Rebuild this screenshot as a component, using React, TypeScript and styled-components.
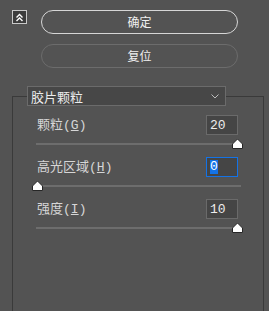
import { createGlobalStyle, styled } from 'styled-components';

const GlobalStyle = createGlobalStyle`
  html, body {
    margin: 0;
    padding: 0;
    background: #535353;
  }
  body {
    width: 269px;
    height: 311px;
    overflow: hidden;
    font-family: "Liberation Mono", "Noto Sans CJK SC", monospace;
  }
`;

const TopBar = styled.div`
  display: flex;
  align-items: flex-start;
  gap: 14px;
  padding: 10px 0 0 12px;
`;

const CollapseBox = styled.div`
  width: 13px;
  height: 12px;
  border: 1px solid #c9c9c9;
  background: #3c3c3c;
  display: flex;
  align-items: center;
  justify-content: center;
`;

const ButtonColumn = styled.div`
  display: flex;
  flex-direction: column;
  gap: 10px;
  width: 197px;
`;

const PillButton = styled.button<{ $primary?: boolean }>`
  height: 24px;
  border-radius: 12px;
  border: 1.5px solid ${(p) => (p.$primary ? '#d6d6d6' : '#6c6c6c')};
  background: transparent;
  color: #f0f0f0;
  font-family: "Noto Sans CJK SC", sans-serif;
  font-size: 12px;
  line-height: 1;
  padding: 0;
  cursor: pointer;
`;

const Group = styled.fieldset`
  margin: 18px 5px 0 12px;
  padding: 9px 25px 0 14px;
  border: 1px solid #3a3a3a;
  min-height: 260px;
`;

const Legend = styled.legend`
  padding: 0;
  margin-right: 2px;
`;

const Dropdown = styled.div`
  width: 197px;
  height: 18px;
  border: 1px solid #6b6b6b;
  background: #474747;
  display: flex;
  align-items: center;
  justify-content: space-between;
  padding: 0 6px 0 3px;
  box-sizing: content-box;
  width: 188px;
  color: #ececec;
  font-family: "Noto Sans CJK SC", sans-serif;
  font-size: 13px;
`;

const Controls = styled.div`
  padding-left: 9px;
  display: flex;
  flex-direction: column;
`;

const Header = styled.div`
  display: flex;
  align-items: center;
  justify-content: space-between;
  height: 20px;
`;

const Label = styled.span`
  margin-left: 1px;
  color: #d6d6d6;
  font-size: 13px;
  line-height: 1;
  u {
    text-decoration-thickness: 1px;
    text-underline-offset: 1px;
  }
`;

const NumberBox = styled.div<{ $focused?: boolean }>`
  width: 30px;
  height: 18px;
  border: 1px solid ${(p) => (p.$focused ? '#1473e6' : '#6a6a6a')};
  background: #454545;
  color: #ededed;
  font-size: 13px;
  display: flex;
  align-items: center;
  padding-left: 3px;
  box-sizing: content-box;
  width: 27px;
`;

const Selected = styled.span`
  background: #1473e6;
  color: #ffffff;
  padding: 0 0 0 0;
  line-height: 14px;
`;

const SliderWrap = styled.div`
  position: relative;
  height: 22px;
`;

const Track = styled.div`
  position: absolute;
  top: 8px;
  left: 0;
  right: -3px;
  height: 2px;
  background: #6d6d6d;
`;

const Thumb = styled.svg`
  position: absolute;
  top: 3px;
  width: 11px;
  height: 11px;
`;

type ControlProps = {
  name: string;
  accel: string;
  value: number;
  pct: number;
  focused?: boolean;
};

function SliderControl({ name, accel, value, pct, focused }: ControlProps) {
  return (
    <>
      <Header>
        <Label>
          {name}(<u>{accel}</u>)
        </Label>
        <NumberBox $focused={focused}>
          {focused ? <Selected>{value}</Selected> : value}
        </NumberBox>
      </Header>
      <SliderWrap>
        <Track />
        <Thumb viewBox="0 0 11 11" style={{ left: 1 + 200 * pct - 5.5 }}>
          <path d="M5.5 1 L10.5 6 V10.5 H0.5 V6 Z" fill="#ffffff" stroke="#262626" strokeWidth="1" />
        </Thumb>
      </SliderWrap>
    </>
  );
}

export default function App() {
  return (
    <>
      <GlobalStyle />
      <TopBar>
        <CollapseBox>
          <svg width="9" height="9" viewBox="0 0 9 9">
            <path d="M1.5 4.5 L4.5 1.5 L7.5 4.5 M1.5 8 L4.5 5 L7.5 8" fill="none" stroke="#ffffff" strokeWidth="1.4" />
          </svg>
        </CollapseBox>
        <ButtonColumn>
          <PillButton type="button" $primary>确定</PillButton>
          <PillButton type="button">复位</PillButton>
        </ButtonColumn>
      </TopBar>
      <Group>
        <Legend>
          <Dropdown>
            <span>胶片颗粒</span>
            <svg width="8" height="5" viewBox="0 0 8 5">
              <path d="M0.5 0.5 L4 4 L7.5 0.5" fill="none" stroke="#bdbdbd" strokeWidth="1" />
            </svg>
          </Dropdown>
        </Legend>
        <Controls>
          <SliderControl name="颗粒" accel="G" value={20} pct={1} />
          <SliderControl name="高光区域" accel="H" value={0} pct={0} focused />
          <SliderControl name="强度" accel="I" value={10} pct={1} />
        </Controls>
      </Group>
    </>
  );
}
